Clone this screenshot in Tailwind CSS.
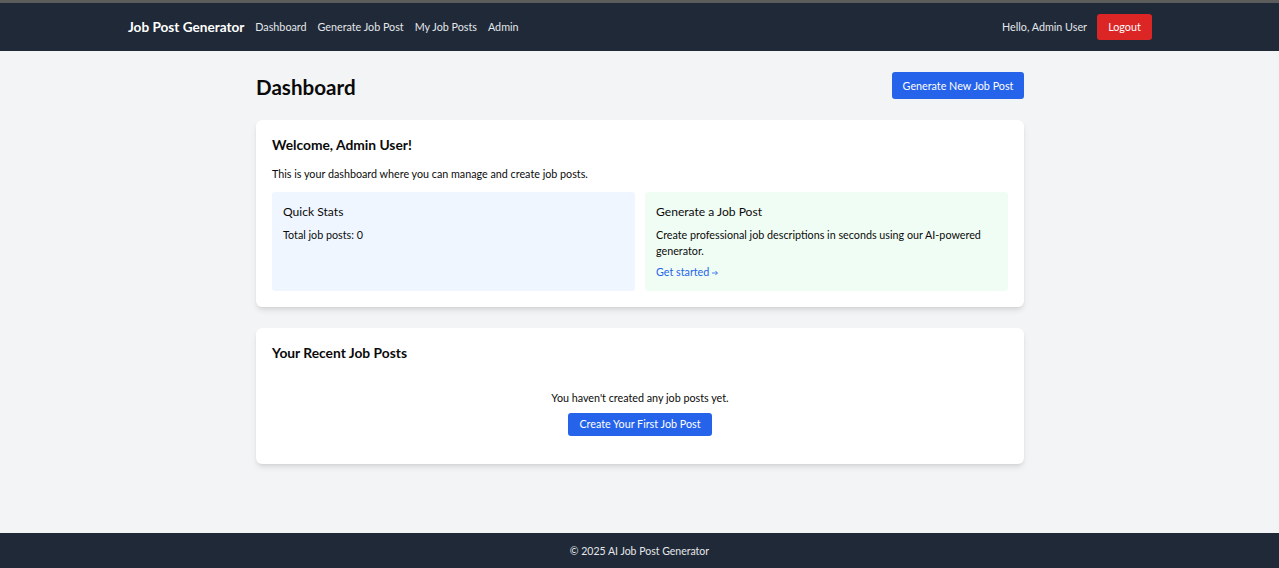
<!doctype html>
<html lang="en">
  <head>
    <meta charset="UTF-8" />
    <title>Job Post Generator</title>
    <script src="https://cdn.jsdelivr.net/npm/@tailwindcss/browser@4"></script>
  </head>
  <body class="bg-[#f3f4f6] min-h-screen flex flex-col font-['Lato',sans-serif] text-[#0a0a0a] text-[10.75px] leading-[16px]">
    <nav class="bg-[#1f2937] text-white h-[51px] border-t-[3px] border-[#5c5c5c]">
      <div class="w-[1024px] ml-[128px] h-full flex items-center justify-between">
        <div class="flex items-center gap-[11px]">
          <a class="font-bold text-[13.6px]">Job Post Generator</a>
          <a class="text-[#e5e7eb]">Dashboard</a>
          <a class="text-[#e5e7eb]">Generate Job Post</a>
          <a class="text-[#e5e7eb]">My Job Posts</a>
          <a class="text-[#e5e7eb]">Admin</a>
        </div>
        <div class="flex items-center gap-[10px]">
          <span class="text-[#e5e7eb]">Hello, Admin User</span>
          <button class="bg-[#dc2626] text-white rounded-[3px] w-[55px] h-[26px]">Logout</button>
        </div>
      </div>
    </nav>

    <main class="flex-1 w-[768px] ml-[256px] pt-[21px]">
      <div class="flex items-center justify-between mb-[21px] h-[27px]">
        <h1 class="text-[20.6px] leading-[27px] font-bold pt-[3px]">Dashboard</h1>
        <button class="bg-[#2563eb] text-white rounded-[3px] w-[132px] h-[27px]">Generate New Job Post</button>
      </div>

      <section class="bg-white rounded-[6px] shadow-md p-4 mb-[21px]">
        <h2 class="text-[13.8px] leading-[18px] font-bold mb-[12px]">Welcome, Admin User!</h2>
        <p class="mb-[10px]">This is your dashboard where you can manage and create job posts.</p>
        <div class="grid grid-cols-2 gap-[10px]">
          <div class="bg-[#eff6ff] rounded-[3px] p-[11px]">
            <h3 class="text-[12.1px] leading-[18px] mb-[6px]">Quick Stats</h3>
            <p>Total job posts: 0</p>
          </div>
          <div class="bg-[#f0fdf4] rounded-[3px] p-[11px]">
            <h3 class="text-[12.1px] leading-[18px] mb-[6px]">Generate a Job Post</h3>
            <p class="mb-[5px]">Create professional job descriptions in seconds using our AI-powered generator.</p>
            <a class="flex items-center gap-[3px] text-[#2563eb]">Get started
              <svg class="w-[6px] h-[6px] mt-[1px]" viewBox="0 0 6 6" fill="none" stroke="currentColor" stroke-width="0.8"><path d="M0 3h5.4M3.4 1l2 2-2 2" /></svg>
            </a>
          </div>
        </div>
      </section>

      <section class="bg-white rounded-[6px] shadow-md p-4">
        <h2 class="text-[13.8px] leading-[18px] font-bold">Your Recent Job Posts</h2>
        <div class="flex flex-col items-center pt-[28px] pb-[12px]">
          <p class="mb-[7px]">You haven't created any job posts yet.</p>
          <button class="bg-[#2563eb] text-white rounded-[3px] w-[144px] h-[23px] pb-[1px]">Create Your First Job Post</button>
        </div>
      </section>
    </main>

    <footer class="bg-[#1f2937] text-[#e5e7eb] text-[10.5px] h-[35px] flex items-center justify-center">
      © 2025 AI Job Post Generator
    </footer>
  </body>
</html>
